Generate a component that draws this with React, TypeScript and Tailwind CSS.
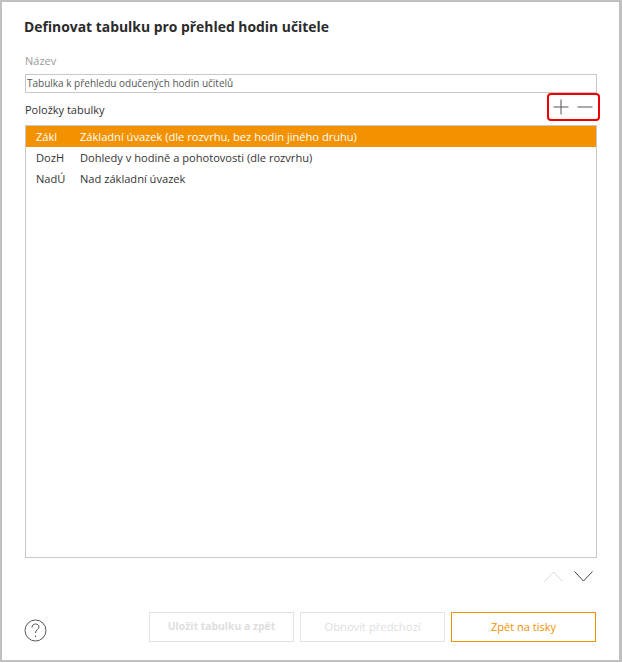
const rows = [
  { code: "Zákl", name: "Základní úvazek (dle rozvrhu, bez hodin jiného druhu)", active: true },
  { code: "DozH", name: "Dohledy v hodině a pohotovosti (dle rozvrhu)", active: false },
  { code: "NadÚ", name: "Nad základní úvazek", active: false },
];

export default function App() {
  return (
    <div className="w-[622px] h-[663px] bg-white">
      <div className="w-[622px] h-[662px] border-2 border-[#c0c0c0] border-r-[3px] pl-[23px] pr-[22px] flex flex-col font-['Open_Sans',sans-serif] text-[11px] text-[#333333]">
        <h1 className="mt-[15px] -ml-[1px] h-[20px] leading-[20px] text-[13.9px] font-bold text-[#2b2b2b]">
          Definovat tabulku pro přehled hodin učitele
        </h1>

        <label className="mt-[16px] h-[16px] leading-[16px] text-[#9a9a9a]">Název</label>
        <div className="mt-[5px] h-[19px] border border-[#c8c8c8] pl-[1px] leading-[17px] text-[10px] text-[#555555]">
          Tabulka k přehledu odučených hodin učitelů
        </div>

        {/* Polozky + tlacitka */}
        <div className="h-[28px] flex items-center justify-between">
          <span className="mt-[7px] text-[#333333]">Položky tabulky</span>
          <div className="w-[53px] h-[28px] -mr-[3px] border-2 border-[#ee0000] rounded-[4px] flex items-center justify-center gap-[8px] pr-[2px]">
            <svg width="16" height="16" viewBox="0 0 16 16" fill="none" stroke="#555555" strokeWidth="1">
              <path d="M8 0.5V15.5M0.5 8H15.5" />
            </svg>
            <svg width="16" height="16" viewBox="0 0 16 16" fill="none" stroke="#555555" strokeWidth="1">
              <path d="M0.5 8H15.5" />
            </svg>
          </div>
        </div>

        <div className="mt-[4px] h-[433px] border border-[#c8c8c8] flex flex-col">
          {rows.map((row) => (
            <div
              key={row.code}
              className={`h-[21px] shrink-0 flex items-center pl-[10px] pt-[1px] text-[11.1px] ${row.active ? "bg-[#f39200] text-white" : "text-[#333333]"}`}
            >
              <span className="w-[44px]">{row.code}</span>
              <span>{row.name}</span>
            </div>
          ))}
        </div>

        <div className="mt-[13px] h-[12px] flex justify-end gap-[11px] pr-[4px]">
          <svg width="19" height="11" viewBox="0 0 19 11" fill="none" stroke="#d8d8d8" strokeWidth="1">
            <path d="M0.5 10.5L9.5 1L18.5 10.5" />
          </svg>
          <svg width="19" height="11" viewBox="0 0 19 11" fill="none" stroke="#444444" strokeWidth="1">
            <path d="M0.5 0.5L9.5 10L18.5 0.5" />
          </svg>
        </div>

        <div className="mt-[29px] h-[30px] flex items-center pr-[1px]">
          <svg className="mt-[7px] -ml-[1px]" width="23" height="23" viewBox="0 0 23 23" fill="none" stroke="#555555" strokeWidth="1">
            <circle cx="11.5" cy="11.5" r="10.5" />
            <path d="M8 8.5C8 6.3 9.6 5 11.5 5C13.4 5 15 6.2 15 8C15 10.5 11.5 10.8 11.5 14" />
            <path d="M11.5 16.5V18" />
          </svg>
          <div className="ml-auto flex gap-[6px]">
            <button className="w-[145px] h-[30px] border border-[#e2e2e2] font-bold text-[10.4px] text-[#dedede]">
              Uložit tabulku a zpět
            </button>
            <button className="w-[145px] h-[30px] border border-[#e2e2e2] text-[11.2px] text-[#dedede]">
              Obnovit předchozí
            </button>
            <button className="w-[145px] h-[30px] border border-[#f39200] text-[#f39200]">
              Zpět na tisky
            </button>
          </div>
        </div>
      </div>
    </div>
  );
}
